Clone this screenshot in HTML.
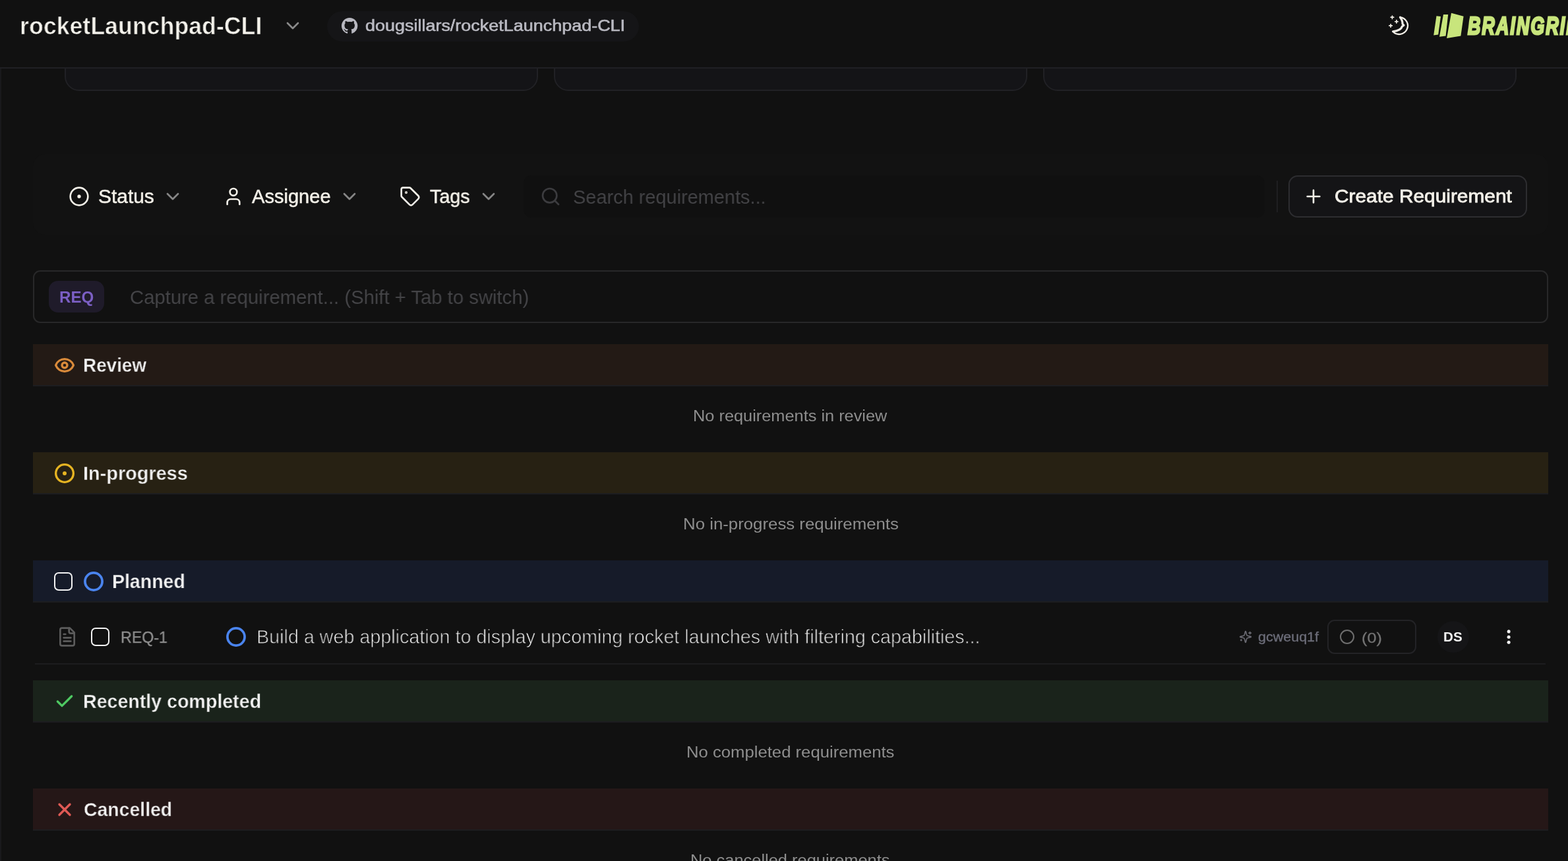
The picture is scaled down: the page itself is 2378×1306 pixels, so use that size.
<!DOCTYPE html>
<html lang="en"><head><meta charset="utf-8"><title>rocketLaunchpad-CLI – Requirements</title>
<style>
html,body{margin:0;padding:0;background:#111111;}
body{width:2378px;height:1306px;overflow:hidden;position:relative;font-family:"Liberation Sans",Arial,sans-serif;}
.t{position:absolute;white-space:nowrap;line-height:1;transform-origin:left top;margin:0;padding:0;will-change:transform;}
.i{position:absolute;display:block;overflow:visible;}
.b{position:absolute;box-sizing:border-box;}
.hd{position:absolute;left:50px;width:2298px;height:64px;box-sizing:border-box;border-bottom:2px solid #1d1d20;}
</style></head><body>
<div class="b" style="left:98px;top:40px;width:718px;height:98px;border:2px solid #212125;border-radius:22px;background:#141417"></div>
<div class="b" style="left:840px;top:40px;width:718px;height:98px;border:2px solid #212125;border-radius:22px;background:#141417"></div>
<div class="b" style="left:1582px;top:40px;width:718px;height:98px;border:2px solid #212125;border-radius:22px;background:#141417"></div>
<div class="b" style="left:0;top:104px;width:2px;height:1202px;background:#19191c"></div>
<div class="b" style="left:0;top:0;width:2378px;height:104px;background:#111111;border-bottom:2px solid #202024"></div>
<svg class="i" style="left:428px;top:23.2px" width="32" height="32" viewBox="0 0 24 24" fill="none" stroke="#8a8a8a" stroke-width="2" stroke-linecap="round" stroke-linejoin="round" ><path d="m6 9 6 6 6-6"/></svg>
<div class="b" style="left:496px;top:17px;width:473px;height:46px;border-radius:23px;background:#151517"></div>
<svg class="i" style="left:517.7px;top:27px" width="24.4" height="24.4" viewBox="0 0 16 16" fill="#b8b8c0"><path d="M8 0C3.58 0 0 3.58 0 8c0 3.54 2.29 6.53 5.47 7.59.4.07.55-.17.55-.38 0-.19-.01-.82-.01-1.49-2.01.37-2.53-.49-2.69-.94-.09-.23-.48-.94-.82-1.13-.28-.15-.68-.52-.01-.53.63-.01 1.08.58 1.23.82.72 1.21 1.87.87 2.33.66.07-.52.28-.87.51-1.07-1.78-.2-3.64-.89-3.64-3.95 0-.87.31-1.59.82-2.15-.08-.2-.36-1.02.08-2.12 0 0 .67-.21 2.2.82.64-.18 1.32-.27 2-.27.68 0 1.36.09 2 .27 1.53-1.04 2.2-.82 2.2-.82.44 1.1.16 1.92.08 2.12.51.56.82 1.27.82 2.15 0 3.07-1.87 3.75-3.65 3.95.29.25.54.73.54 1.48 0 1.07-.01 1.93-.01 2.2 0 .21.15.46.55.38A8.013 8.013 0 0 0 16 8c0-4.42-3.58-8-8-8z"/></svg>
<svg class="i" style="left:2100px;top:16px" width="44" height="44" viewBox="0 0 44 44" fill="none" stroke="#f3f0e8" stroke-width="2.3" stroke-linecap="round" stroke-linejoin="round">
<path d="M23.38 10.03A13 13 0 1 1 12.38 31.75"/>
<path d="M23.4 10.2C26 13.6 27.2 17 27 20.2L29 22.4L26.6 23.8C25.4 28 20 31.4 12.6 31.7" stroke-width="3.1"/>
<path d="M11.46 8v4.4M9.26 10.2h4.4M17.9 14.55v4.4M15.7 16.75h4.4M9.1 20.77v4.4M6.9 22.97h4.4" stroke-width="1.7"/>
</svg>
<svg class="i" style="left:2170px;top:14px" width="56" height="50" viewBox="2170 14 56 50"><g fill="#c8e57c">
<polygon points="2178.5,24.3 2185,25 2181.2,52.6 2174.2,53.6"/>
<polygon points="2189,22 2196.2,22 2192.6,54.6 2183,55.8"/>
<polygon points="2201,19.7 2219.6,24.8 2215.4,54.4 2194.1,58.1"/>
</g></svg>
<div class="t" id="logo" style="left:2226px;top:21.2px;font-size:37.5px;font-weight:700;font-style:italic;color:#c8e57c;-webkit-text-stroke:3px #c8e57c;transform:scaleX(0.713);letter-spacing:3px">BRAINGRID</div>
<div class="b" style="left:50px;top:234px;width:2298px;height:122px;border-radius:18px;background:#121212"></div>
<svg class="i" style="left:104px;top:282px" width="32" height="32" viewBox="0 0 24 24" fill="none" stroke="#f3f0e8" stroke-width="2" stroke-linecap="round" stroke-linejoin="round" ><circle cx="12" cy="12" r="10"/><circle cx="12" cy="12" r="1" fill="#f3f0e8"/></svg>
<svg class="i" style="left:246.2px;top:282px" width="32" height="32" viewBox="0 0 24 24" fill="none" stroke="#868686" stroke-width="2" stroke-linecap="round" stroke-linejoin="round" ><path d="m6 9 6 6 6-6"/></svg>
<svg class="i" style="left:338.1px;top:282px" width="32" height="32" viewBox="0 0 24 24" fill="none" stroke="#f3f0e8" stroke-width="2" stroke-linecap="round" stroke-linejoin="round" ><path d="M19 21v-2a4 4 0 0 0-4-4H9a4 4 0 0 0-4 4v2"/><circle cx="12" cy="7" r="4"/></svg>
<svg class="i" style="left:514px;top:282px" width="32" height="32" viewBox="0 0 24 24" fill="none" stroke="#868686" stroke-width="2" stroke-linecap="round" stroke-linejoin="round" ><path d="m6 9 6 6 6-6"/></svg>
<svg class="i" style="left:606px;top:282px" width="32" height="32" viewBox="0 0 24 24" fill="none" stroke="#f3f0e8" stroke-width="2" stroke-linecap="round" stroke-linejoin="round" ><path d="M12.586 2.586A2 2 0 0 0 11.172 2H4a2 2 0 0 0-2 2v7.172a2 2 0 0 0 .586 1.414l8.704 8.704a2.426 2.426 0 0 0 3.42 0l6.58-6.58a2.426 2.426 0 0 0 0-3.42z"/><circle cx="7.5" cy="7.5" r=".5" fill="#f3f0e8"/></svg>
<svg class="i" style="left:725.1px;top:282px" width="32" height="32" viewBox="0 0 24 24" fill="none" stroke="#868686" stroke-width="2" stroke-linecap="round" stroke-linejoin="round" ><path d="m6 9 6 6 6-6"/></svg>
<div class="b" style="left:794px;top:266px;width:1124px;height:64px;border-radius:12px;background:#101010"></div>
<svg class="i" style="left:819px;top:282px" width="32" height="32" viewBox="0 0 24 24" fill="none" stroke="#3c3c3f" stroke-width="2" stroke-linecap="round" stroke-linejoin="round" ><circle cx="11" cy="11" r="8"/><path d="m21 21-4.3-4.3"/></svg>
<div class="b" style="left:1936px;top:274px;width:2px;height:48px;background:#1f1f21"></div>
<div class="b" style="left:1954px;top:266px;width:362px;height:64px;border:2px solid #2d2d30;border-radius:14px;background:#141416"></div>
<svg class="i" style="left:1976px;top:282px" width="32" height="32" viewBox="0 0 24 24" fill="none" stroke="#f3f0e8" stroke-width="2" stroke-linecap="round" stroke-linejoin="round" ><path d="M5 12h14M12 5v14"/></svg>
<div class="b" style="left:50px;top:410px;width:2298px;height:80px;border:2px solid #282829;border-radius:11px;background:#111111"></div>
<div class="b" style="left:74px;top:426px;width:84px;height:48px;border-radius:14px;background:#1f1b2a"></div>
<div class="hd" style="top:522px;background:#231a15"></div>
<svg class="i" style="left:82px;top:538px" width="32" height="32" viewBox="0 0 24 24" fill="none" stroke="#d98a3a" stroke-width="2.5" stroke-linecap="round" stroke-linejoin="round" ><path d="M2.062 12.348a1 1 0 0 1 0-.696 10.75 10.75 0 0 1 19.876 0 1 1 0 0 1 0 .696 10.75 10.75 0 0 1-19.876 0"/><circle cx="12" cy="12" r="3"/></svg>
<div class="hd" style="top:686px;background:#272113"></div>
<svg class="i" style="left:82.1px;top:701.9px" width="32" height="32" viewBox="0 0 24 24" fill="none" stroke="#e6b422" stroke-width="2.5" stroke-linecap="round" stroke-linejoin="round" ><circle cx="12" cy="12" r="10"/><circle cx="12" cy="12" r="1" fill="#e6b422"/></svg>
<div class="hd" style="top:850px;background:#161b29"></div>
<div class="b" style="left:82px;top:868px;width:28px;height:28px;border:2px solid #f2f2f2;border-radius:7px"></div>
<svg class="i" style="left:126px;top:866px" width="32" height="32" viewBox="0 0 24 24" fill="none" stroke="#4a84ee" stroke-width="2.8" stroke-linecap="round" stroke-linejoin="round" ><circle cx="12" cy="12" r="9.8"/></svg>
<svg class="i" style="left:86px;top:950px" width="32" height="32" viewBox="0 0 24 24" fill="none" stroke="#5c5c5c" stroke-width="2" stroke-linecap="round" stroke-linejoin="round" ><path d="M15 2H6a2 2 0 0 0-2 2v16a2 2 0 0 0 2 2h12a2 2 0 0 0 2-2V7Z"/><path d="M14 2v4a2 2 0 0 0 2 2h4"/><path d="M10 9H8"/><path d="M16 13H8"/><path d="M16 17H8"/></svg>
<div class="b" style="left:138px;top:952px;width:28px;height:28px;border:2px solid #f2f2f2;border-radius:7px"></div>
<svg class="i" style="left:342px;top:950px" width="32" height="32" viewBox="0 0 24 24" fill="none" stroke="#4a84ee" stroke-width="2.8" stroke-linecap="round" stroke-linejoin="round" ><circle cx="12" cy="12" r="9.8"/></svg>
<svg class="i" style="left:1879.4px;top:956.3px" width="20" height="20" viewBox="0 0 24 24" fill="none" stroke="#6a6a72" stroke-width="2" stroke-linecap="round" stroke-linejoin="round" ><path d="M9.937 15.5A2 2 0 0 0 8.5 14.063l-6.135-1.582a.5.5 0 0 1 0-.962L8.5 9.936A2 2 0 0 0 9.937 8.5l1.582-6.135a.5.5 0 0 1 .963 0L14.063 8.5A2 2 0 0 0 15.5 9.937l6.135 1.581a.5.5 0 0 1 0 .964L15.5 14.063a2 2 0 0 0-1.437 1.437l-1.582 6.135a.5.5 0 0 1-.963 0z"/><path d="M20 3v4"/><path d="M22 5h-4"/><path d="M4 17v2"/><path d="M5 18H3"/></svg>
<div class="b" style="left:2013px;top:940px;width:135px;height:52px;border:2px solid #232326;border-radius:11px"></div>
<svg class="i" style="left:2031px;top:954.2px" width="24" height="24" viewBox="0 0 24 24" fill="none" stroke="#6e6e6e" stroke-width="2" stroke-linecap="round" stroke-linejoin="round" ><circle cx="12" cy="12" r="10"/></svg>
<div class="b" style="left:2180px;top:942px;width:48px;height:48px;border-radius:24px;background:#151517"></div>
<svg class="i" style="left:2280px;top:950px" width="16" height="32" viewBox="0 0 16 32" fill="#f0f0f0"><circle cx="8.1" cy="7.9" r="2.55"/><circle cx="8.1" cy="16.25" r="2.55"/><circle cx="8.1" cy="24.2" r="2.55"/></svg>
<div class="b" style="left:53px;top:1006px;width:2291px;height:2px;background:#1c1c1f"></div>
<div class="hd" style="top:1032px;background:#1a231b"></div>
<svg class="i" style="left:82.1px;top:1048px" width="32" height="32" viewBox="0 0 24 24" fill="none" stroke="#4ec962" stroke-width="2.5" stroke-linecap="round" stroke-linejoin="round" ><path d="M20 6 9 17l-5-5"/></svg>
<div class="hd" style="top:1196px;background:#251717"></div>
<svg class="i" style="left:82.1px;top:1212px" width="32" height="32" viewBox="0 0 24 24" fill="none" stroke="#e05a55" stroke-width="2.5" stroke-linecap="round" stroke-linejoin="round" ><path d="M18 6 6 18"/><path d="m6 6 12 12"/></svg>
<div class="t" id="title" style="left:29.50px;top:20.96px;font-size:37.14px;color:#f5f3ec;transform:scaleX(0.9628);font-weight:700;-webkit-text-stroke:0.7px #111111">rocketLaunchpad-CLI</div>
<div class="t" id="pill" style="left:554.09px;top:28.28px;font-size:23.41px;color:#babac2;transform:scaleX(1.1517);-webkit-text-stroke:0.6px #babac2">dougsillars/rocketLaunchpad-CLI</div>
<div class="t" id="status" style="left:148.99px;top:284.18px;font-size:28.84px;color:#f3f0e8;transform:scaleX(1.0374);-webkit-text-stroke:0.5px #f3f0e8">Status</div>
<div class="t" id="assignee" style="left:382.28px;top:284.18px;font-size:28.84px;color:#f3f0e8;transform:scaleX(1.0087);-webkit-text-stroke:0.5px #f3f0e8">Assignee</div>
<div class="t" id="tags" style="left:652.12px;top:284.18px;font-size:28.84px;color:#f3f0e8;transform:scaleX(0.9941);-webkit-text-stroke:0.5px #f3f0e8">Tags</div>
<div class="t" id="search" style="left:869.02px;top:284.14px;font-size:29.36px;color:#434346;transform:scaleX(0.9851)">Search requirements...</div>
<div class="t" id="create" style="left:2023.92px;top:284.49px;font-size:27.88px;color:#f3f0e8;transform:scaleX(1.0711);-webkit-text-stroke:0.8px #f3f0e8">Create Requirement</div>
<div class="t" id="req" style="left:90.24px;top:438.89px;font-size:24.11px;color:#7b5fc4;transform:scaleX(0.9997);font-weight:700">REQ</div>
<div class="t" id="capture" style="left:197.10px;top:436.34px;font-size:29.36px;color:#444447;transform:scaleX(0.9967)">Capture a requirement... (Shift + Tab to switch)</div>
<div class="t" id="review" style="left:125.91px;top:539.72px;font-size:29.03px;color:#f3f3f3;transform:scaleX(0.9600);font-weight:700;-webkit-text-stroke:0.35px #231a15">Review</div>
<div class="t" id="norev" style="left:1050.73px;top:618.97px;font-size:24.25px;color:#8e8e8e;transform:scaleX(1.0451)">No requirements in review</div>
<div class="t" id="inprog" style="left:125.80px;top:703.72px;font-size:29.03px;color:#f3f3f3;transform:scaleX(0.9944);font-weight:700;-webkit-text-stroke:0.35px #272113">In-progress</div>
<div class="t" id="noinp" style="left:1035.62px;top:783.27px;font-size:24.25px;color:#8e8e8e;transform:scaleX(1.0639)">No in-progress requirements</div>
<div class="t" id="planned" style="left:169.71px;top:867.68px;font-size:28.96px;color:#f3f3f3;transform:scaleX(0.9832);font-weight:700;-webkit-text-stroke:0.25px #161b29">Planned</div>
<div class="t" id="req1" style="left:182.53px;top:955.71px;font-size:23.73px;color:#8e8e8e;transform:scaleX(0.9770);-webkit-text-stroke:0.4px #8e8e8e">REQ-1</div>
<div class="t" id="build" style="left:389.02px;top:951.68px;font-size:29.20px;color:#efefef;transform:scaleX(0.9833);-webkit-text-stroke:0.85px #111111">Build a web application to display upcoming rocket launches with filtering capabilities...</div>
<div class="t" id="gcw" style="left:1908.12px;top:955.87px;font-size:20.00px;color:#6c6d79;transform:scaleX(1.0748);-webkit-text-stroke:0.35px #6c6d79">gcweuq1f</div>
<div class="t" id="zero" style="left:2065.15px;top:955.91px;font-size:22.90px;color:#737373;transform:scaleX(1.0999);-webkit-text-stroke:0.3px #737373">(0)</div>
<div class="t" id="ds" style="left:2189.37px;top:956.90px;font-size:19.84px;color:#f0f0f0;transform:scaleX(1.0413);font-weight:700">DS</div>
<div class="t" id="recent" style="left:125.93px;top:1049.72px;font-size:29.03px;color:#f3f3f3;transform:scaleX(0.9852);font-weight:700;-webkit-text-stroke:0.35px #1a231b">Recently completed</div>
<div class="t" id="nocomp" style="left:1040.89px;top:1128.97px;font-size:24.25px;color:#8e8e8e;transform:scaleX(1.0589)">No completed requirements</div>
<div class="t" id="cancelled" style="left:126.97px;top:1213.72px;font-size:29.03px;color:#f3f3f3;transform:scaleX(0.9786);font-weight:700;-webkit-text-stroke:0.35px #251717">Cancelled</div>
<div class="t" id="nocanc" style="left:1047.06px;top:1293.07px;font-size:24.25px;color:#8e8e8e;transform:scaleX(1.0485)">No cancelled requirements</div>
</body></html>
